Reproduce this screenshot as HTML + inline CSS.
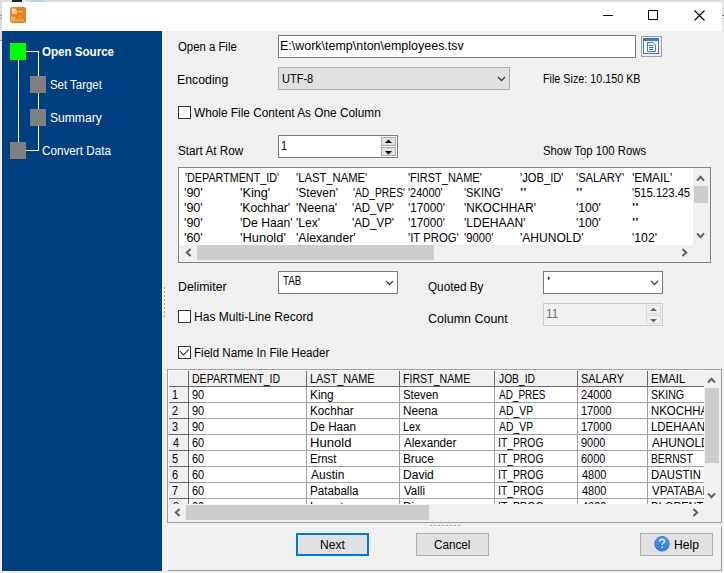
<!DOCTYPE html><html><head><meta charset="utf-8"><style>
*{margin:0;padding:0;box-sizing:border-box}
html,body{width:724px;height:573px;overflow:hidden;background:#f0f0f0;font-family:"Liberation Sans",sans-serif;font-size:12px;color:#000;position:relative}
.a{position:absolute}
.t{position:absolute;white-space:nowrap;line-height:14px}
.cl{position:absolute;overflow:hidden;left:0;top:0}
</style></head><body>
<div class="a" style="left:0px;top:0px;width:724px;height:2px;background:#dedede"></div>
<div class="a" style="left:0px;top:0px;width:2px;height:40px;background:#dcdcdc"></div>
<div class="a" style="left:0px;top:40px;width:2px;height:533px;background:#f0f0f0"></div>
<div class="a" style="left:0px;top:15px;width:2px;height:1px;background:#909090"></div>
<div class="a" style="left:0px;top:18px;width:2px;height:1px;background:#a8a8a8"></div>
<div class="a" style="left:0px;top:40px;width:2px;height:1px;background:#a0a0a0"></div>
<div class="a" style="left:722px;top:0px;width:2px;height:31px;background:#e6e6e6"></div>
<div class="a" style="left:722px;top:31px;width:2px;height:542px;background:#f0f0f0"></div>
<div class="a" style="left:722px;top:15px;width:2px;height:1px;background:#808080"></div>
<div class="a" style="left:722px;top:18px;width:2px;height:1px;background:#c8c8c8"></div>
<div class="a" style="left:0px;top:571px;width:724px;height:2px;background:#f0f0f0"></div>
<div class="a" style="left:12px;top:0px;width:10px;height:2px;background:#202020"></div>
<div class="a" style="left:30px;top:0px;width:14px;height:2px;background:#b4cff0"></div>
<div class="a" style="left:2px;top:2px;width:720px;height:29px;background:#fff"></div>
<div class="a" style="left:2px;top:31px;width:720px;height:540px;background:#f0f0f0"></div>
<svg class="a" style="left:10px;top:7px" width="16" height="16"><rect x="0" y="0" width="16" height="16" rx="2.5" fill="#e8821f"/><path d="M2.2 1.8H4.8L6.3 3.3V6.6H2.2Z" fill="#f6d2ad" stroke="#fbe8d5" stroke-width="0.6"/><rect x="8" y="4" width="4.5" height="1.2" fill="#f2b57a"/><rect x="9.2" y="8.5" width="1.4" height="1.4" fill="#f2b57a"/><rect x="1.5" y="10" width="3.5" height="4" fill="#eea567" stroke="#f6caa0" stroke-width="0.6"/><rect x="6" y="12.8" width="8" height="1.2" fill="#f2b57a"/></svg>
<div class="a" style="left:603px;top:15px;width:10px;height:1px;background:#000"></div>
<div class="a" style="left:648px;top:10px;width:10px;height:10px;border:1px solid #000"></div>
<svg class="a" style="left:694px;top:10px" width="11" height="11"><path d="M0.5 0.5L10.5 10.5M10.5 0.5L0.5 10.5" stroke="#000" stroke-width="1.1"/></svg>
<div class="a" style="left:2px;top:31px;width:160px;height:540px;background:#003f7f"></div>
<div class="a" style="left:26px;top:51px;width:13px;height:1px;background:#fff"></div>
<div class="a" style="left:38px;top:51px;width:1px;height:100px;background:#fff"></div>
<div class="a" style="left:26px;top:150px;width:13px;height:1px;background:#fff"></div>
<div class="a" style="left:18px;top:59px;width:1px;height:83px;background:#fff"></div>
<div class="a" style="left:10px;top:43px;width:16px;height:17px;background:#00ff00"></div>
<div class="a" style="left:30px;top:76px;width:16px;height:17px;background:#808080"></div>
<div class="a" style="left:30px;top:109px;width:16px;height:17px;background:#808080"></div>
<div class="a" style="left:10px;top:142px;width:16px;height:17px;background:#808080"></div>
<div class="t" style="left:42.40px;top:44.7px;transform:scaleX(0.9649);transform-origin:0 0;color:#fff;font-weight:bold">Open Source</div>
<div class="t" style="left:50.25px;top:77.6px;transform:scaleX(0.9519);transform-origin:0 0;color:#fff">Set Target</div>
<div class="t" style="left:49.59px;top:110.8px;transform:scaleX(1.0080);transform-origin:0 0;color:#fff">Summary</div>
<div class="t" style="left:41.73px;top:143.8px;transform:scaleX(0.9743);transform-origin:0 0;color:#fff">Convert Data</div>
<div class="t" style="left:178.30px;top:39.8px;transform:scaleX(0.9468);transform-origin:0 0;">Open a File</div>
<div class="a" style="left:278px;top:35px;width:358px;height:23px;background:#fff;border:1px solid #7a7a7a"></div>
<div class="t" style="left:279.96px;top:38.8px;transform:scaleX(1.0398);transform-origin:0 0;">E:\work\temp\nton\employees.tsv</div>
<div class="a" style="left:641px;top:36px;width:21px;height:21px;background:#f0ebe5;border:1px solid #a0a0a0"></div>
<svg class="a" style="left:643px;top:38px" width="17" height="17"><rect x="0.5" y="0.5" width="15" height="15" fill="#fbf8f2" stroke="#3c78d0"/><rect x="0" y="0" width="16" height="3" fill="#3c78d0"/><rect x="1" y="1" width="1" height="1" fill="#f00"/><path d="M4.5 4.5H10L12.5 7V13.5H4.5Z" fill="#eafaff" stroke="#3c78d0"/><path d="M6 7.5H10.5M6 9.5H10.5M6 11.5H10.5" stroke="#587090" stroke-width="1"/></svg>
<div class="t" style="left:177.28px;top:73.0px;transform:scaleX(1.0250);transform-origin:0 0;">Encoding</div>
<div class="a" style="left:278px;top:67px;width:232px;height:23px;background:#e1e1e1;border:1px solid #adadad"></div>
<div class="t" style="left:281.68px;top:72.1px;transform:scaleX(0.9170);transform-origin:0 0;">UTF-8</div>
<svg class="a" style="left:496.5px;top:76px" width="9" height="6"><path d="M1 1L4.5 4.5L8 1" stroke="#404040" fill="none" stroke-width="1.3"/></svg>
<div class="t" style="left:542.60px;top:72.0px;transform:scaleX(0.8972);transform-origin:0 0;">File Size: 10.150 KB</div>
<div class="a" style="left:178px;top:106px;width:13px;height:13px;background:#fff;border:1px solid #333"></div>
<div class="t" style="left:194.00px;top:106.0px;transform:scaleX(0.9857);transform-origin:0 0;">Whole File Content As One Column</div>
<div class="t" style="left:177.52px;top:143.5px;transform:scaleX(0.9773);transform-origin:0 0;">Start At Row</div>
<div class="a" style="left:278px;top:135px;width:120px;height:23px;background:#fff;border:1px solid #7a7a7a"></div>
<div class="t" style="left:281.39px;top:139.0px;transform:scaleX(0.9133);transform-origin:0 0;">1</div>
<div class="a" style="left:381px;top:137px;width:15px;height:9px;background:#e1e1e1;border:1px solid #adadad"></div>
<div class="a" style="left:381px;top:147px;width:15px;height:9px;background:#e1e1e1;border:1px solid #adadad"></div>
<svg class="a" style="left:385px;top:139px" width="7" height="16"><path d="M0 4L3.5 0.5L7 4Z M0 12L3.5 15.5L7 12Z" fill="#000"/></svg>
<div class="t" style="left:542.56px;top:144.0px;transform:scaleX(0.9444);transform-origin:0 0;">Show Top 100 Rows</div>
<div class="a" style="left:178px;top:167px;width:533px;height:96px;background:#fff;border:1px solid #828282"></div>
<div class="a" style="left:179px;top:168px;width:514px;height:77px;overflow:hidden"><div class="a" style="left:-179px;top:-168px;width:724px;height:573px">
<div class="t" style="left:184.50px;top:170.7px;transform:scaleX(0.8971);transform-origin:0 0;">'DEPARTMENT_ID'</div>
<div class="t" style="left:296.46px;top:170.7px;transform:scaleX(0.9370);transform-origin:0 0;">'LAST_NAME'</div>
<div class="t" style="left:408.48px;top:170.7px;transform:scaleX(0.9153);transform-origin:0 0;">'FIRST_NAME'</div>
<div class="t" style="left:520.47px;top:170.7px;transform:scaleX(0.9330);transform-origin:0 0;">'JOB_ID'</div>
<div class="t" style="left:576.47px;top:170.7px;transform:scaleX(0.9319);transform-origin:0 0;">'SALARY'</div>
<div class="t" style="left:632.41px;top:170.7px;transform:scaleX(0.9903);transform-origin:0 0;">'EMAIL'</div>
<div class="t" style="left:184.35px;top:185.7px;transform:scaleX(1.0453);transform-origin:0 0;">'90'</div>
<div class="t" style="left:240.34px;top:185.7px;transform:scaleX(1.0580);transform-origin:0 0;">'King'</div>
<div class="t" style="left:296.40px;top:185.7px;transform:scaleX(0.9998);transform-origin:0 0;">'Steven'</div>
<div class="t" style="left:352.54px;top:185.7px;transform:scaleX(0.8576);transform-origin:0 0;">'AD_PRES'</div>
<div class="t" style="left:408.49px;top:185.7px;transform:scaleX(0.9135);transform-origin:0 0;">'24000'</div>
<div class="t" style="left:464.47px;top:185.7px;transform:scaleX(0.9268);transform-origin:0 0;">'SKING'</div>
<div class="t" style="left:519.97px;top:185.7px;transform:scaleX(1.4286);transform-origin:0 0;">''</div>
<div class="t" style="left:575.97px;top:185.7px;transform:scaleX(1.4286);transform-origin:0 0;">''</div>
<div class="t" style="left:632.47px;top:185.7px;transform:scaleX(0.9312);transform-origin:0 0;">'515.123.45</div>
<div class="t" style="left:184.35px;top:200.7px;transform:scaleX(1.0453);transform-origin:0 0;">'90'</div>
<div class="t" style="left:240.38px;top:200.7px;transform:scaleX(1.0164);transform-origin:0 0;">'Kochhar'</div>
<div class="t" style="left:296.37px;top:200.7px;transform:scaleX(1.0311);transform-origin:0 0;">'Neena'</div>
<div class="t" style="left:352.44px;top:200.7px;transform:scaleX(0.9556);transform-origin:0 0;">'AD_VP'</div>
<div class="t" style="left:408.42px;top:200.7px;transform:scaleX(0.9757);transform-origin:0 0;">'17000'</div>
<div class="t" style="left:464.42px;top:200.7px;transform:scaleX(0.9819);transform-origin:0 0;">'NKOCHHAR'</div>
<div class="t" style="left:576.39px;top:200.7px;transform:scaleX(1.0095);transform-origin:0 0;">'100'</div>
<div class="t" style="left:631.97px;top:200.7px;transform:scaleX(1.4286);transform-origin:0 0;">''</div>
<div class="t" style="left:184.35px;top:215.7px;transform:scaleX(1.0453);transform-origin:0 0;">'90'</div>
<div class="t" style="left:240.39px;top:215.7px;transform:scaleX(1.0118);transform-origin:0 0;">'De Haan'</div>
<div class="t" style="left:296.40px;top:215.7px;transform:scaleX(0.9997);transform-origin:0 0;">'Lex'</div>
<div class="t" style="left:352.44px;top:215.7px;transform:scaleX(0.9556);transform-origin:0 0;">'AD_VP'</div>
<div class="t" style="left:408.42px;top:215.7px;transform:scaleX(0.9757);transform-origin:0 0;">'17000'</div>
<div class="t" style="left:464.39px;top:215.7px;transform:scaleX(1.0050);transform-origin:0 0;">'LDEHAAN'</div>
<div class="t" style="left:576.39px;top:215.7px;transform:scaleX(1.0095);transform-origin:0 0;">'100'</div>
<div class="t" style="left:631.97px;top:215.7px;transform:scaleX(1.4286);transform-origin:0 0;">''</div>
<div class="t" style="left:184.35px;top:230.7px;transform:scaleX(1.0453);transform-origin:0 0;">'60'</div>
<div class="t" style="left:240.32px;top:230.7px;transform:scaleX(1.0765);transform-origin:0 0;">'Hunold'</div>
<div class="t" style="left:296.38px;top:230.7px;transform:scaleX(1.0158);transform-origin:0 0;">'Alexander'</div>
<div class="t" style="left:408.46px;top:230.7px;transform:scaleX(0.9431);transform-origin:0 0;">'IT PROG'</div>
<div class="t" style="left:464.46px;top:230.7px;transform:scaleX(0.9400);transform-origin:0 0;">'9000'</div>
<div class="t" style="left:520.40px;top:230.7px;transform:scaleX(1.0048);transform-origin:0 0;">'AHUNOLD'</div>
<div class="t" style="left:632.38px;top:230.7px;transform:scaleX(1.0174);transform-origin:0 0;">'102'</div>
</div></div>
<div class="a" style="left:693px;top:168px;width:17px;height:77px;background:#f0f0f0"></div>
<div class="a" style="left:694px;top:186px;width:14px;height:17px;background:#cdcdcd"></div>
<div class="a" style="left:179px;top:245px;width:531px;height:17px;background:#f0f0f0"></div>
<div class="a" style="left:197px;top:245px;width:237px;height:15px;background:#cdcdcd"></div>
<svg class="a" style="left:695.8px;top:173.8px" width="9" height="9"><path d="M1 6.6L4.5 2.8L8 6.6" stroke="#606060" fill="none" stroke-width="2"/></svg>
<svg class="a" style="left:695.8px;top:231.0px" width="9" height="9"><path d="M1 2.4L4.5 6.2L8 2.4" stroke="#606060" fill="none" stroke-width="2"/></svg>
<svg class="a" style="left:183.5px;top:248.0px" width="9" height="9"><path d="M6.6 1L2.8 4.5L6.6 8" stroke="#606060" fill="none" stroke-width="2"/></svg>
<svg class="a" style="left:679.5px;top:247.8px" width="9" height="9"><path d="M2.4 1L6.2 4.5L2.4 8" stroke="#606060" fill="none" stroke-width="2"/></svg>
<div class="t" style="left:177.67px;top:280.2px;transform:scaleX(1.0283);transform-origin:0 0;">Delimiter</div>
<div class="a" style="left:278px;top:271px;width:120px;height:23px;background:#fff;border:1px solid #7a7a7a"></div>
<div class="t" style="left:283.20px;top:274.2px;transform:scaleX(0.8182);transform-origin:0 0;">TAB</div>
<svg class="a" style="left:385px;top:280px" width="9" height="6"><path d="M1 1L4.5 4.5L8 1" stroke="#404040" fill="none" stroke-width="1.3"/></svg>
<div class="t" style="left:428.10px;top:279.7px;transform:scaleX(0.9772);transform-origin:0 0;">Quoted By</div>
<div class="a" style="left:543px;top:271px;width:120px;height:23px;background:#fff;border:1px solid #7a7a7a"></div>
<div class="t" style="left:546.57px;top:275.0px;transform:scaleX(1.4286);transform-origin:0 0;">'</div>
<svg class="a" style="left:649.5px;top:280px" width="9" height="6"><path d="M1 1L4.5 4.5L8 1" stroke="#404040" fill="none" stroke-width="1.3"/></svg>
<div class="a" style="left:178px;top:310px;width:13px;height:13px;background:#fff;border:1px solid #333"></div>
<div class="t" style="left:194.00px;top:309.5px;transform:scaleX(1.0034);transform-origin:0 0;">Has Multi-Line Record</div>
<div class="t" style="left:427.96px;top:311.6px;transform:scaleX(1.0395);transform-origin:0 0;">Column Count</div>
<div class="a" style="left:543px;top:303px;width:120px;height:23px;background:#f0f0f0;border:1px solid #cccccc"></div>
<div class="t" style="left:546.02px;top:306.5px;transform:scaleX(0.9787);transform-origin:0 0;color:#6d6d6d">11</div>
<div class="a" style="left:646px;top:305px;width:15px;height:9px;background:#f0f0f0;border:1px solid #d9d9d9"></div>
<div class="a" style="left:646px;top:315px;width:15px;height:9px;background:#f0f0f0;border:1px solid #d9d9d9"></div>
<svg class="a" style="left:650px;top:307px" width="7" height="16"><path d="M0 4L3.5 0.5L7 4Z M0 12L3.5 15.5L7 12Z" fill="#6a6a6a"/></svg>
<div class="a" style="left:178px;top:346px;width:13px;height:13px;background:#fff;border:1px solid #333"></div>
<svg class="a" style="left:178px;top:346px" width="13" height="13"><path d="M1.8 5.2L5.4 9L11 3.3" stroke="#3a3a3a" fill="none" stroke-width="1.1"/></svg>
<div class="t" style="left:194.03px;top:346.0px;transform:scaleX(0.9662);transform-origin:0 0;">Field Name In File Header</div>
<div class="a" style="left:167px;top:369px;width:555px;height:154px;background:#fff;border:1px solid #a0a0a0"></div>
<div class="a" style="left:168px;top:370px;width:536px;height:134px;overflow:hidden"><div class="a" style="left:-168px;top:-370px;width:724px;height:573px">
<div class="a" style="left:169px;top:371px;width:535px;height:15px;background:#f0f0f0"></div>
<div class="a" style="left:169px;top:387px;width:19px;height:120px;background:#f0f0f0"></div>
<div class="a" style="left:169px;top:402px;width:19px;height:1px;background:#696969"></div>
<div class="a" style="left:189px;top:402px;width:520px;height:1px;background:#a0a0a0"></div>
<div class="a" style="left:169px;top:418px;width:19px;height:1px;background:#696969"></div>
<div class="a" style="left:189px;top:418px;width:520px;height:1px;background:#a0a0a0"></div>
<div class="a" style="left:169px;top:434px;width:19px;height:1px;background:#696969"></div>
<div class="a" style="left:189px;top:434px;width:520px;height:1px;background:#a0a0a0"></div>
<div class="a" style="left:169px;top:450px;width:19px;height:1px;background:#696969"></div>
<div class="a" style="left:189px;top:450px;width:520px;height:1px;background:#a0a0a0"></div>
<div class="a" style="left:169px;top:466px;width:19px;height:1px;background:#696969"></div>
<div class="a" style="left:189px;top:466px;width:520px;height:1px;background:#a0a0a0"></div>
<div class="a" style="left:169px;top:482px;width:19px;height:1px;background:#696969"></div>
<div class="a" style="left:189px;top:482px;width:520px;height:1px;background:#a0a0a0"></div>
<div class="a" style="left:169px;top:498px;width:19px;height:1px;background:#696969"></div>
<div class="a" style="left:189px;top:498px;width:520px;height:1px;background:#a0a0a0"></div>
<div class="a" style="left:169px;top:514px;width:19px;height:1px;background:#696969"></div>
<div class="a" style="left:189px;top:514px;width:520px;height:1px;background:#a0a0a0"></div>
<div class="a" style="left:169px;top:386px;width:540px;height:1px;background:#696969"></div>
<div class="a" style="left:188px;top:371px;width:1px;height:140px;background:#696969"></div>
<div class="a" style="left:306px;top:371px;width:1px;height:16px;background:#696969"></div>
<div class="a" style="left:306px;top:387px;width:1px;height:130px;background:#a0a0a0"></div>
<div class="a" style="left:399px;top:371px;width:1px;height:16px;background:#696969"></div>
<div class="a" style="left:399px;top:387px;width:1px;height:130px;background:#a0a0a0"></div>
<div class="a" style="left:494px;top:371px;width:1px;height:16px;background:#696969"></div>
<div class="a" style="left:494px;top:387px;width:1px;height:130px;background:#a0a0a0"></div>
<div class="a" style="left:577px;top:371px;width:1px;height:16px;background:#696969"></div>
<div class="a" style="left:577px;top:387px;width:1px;height:130px;background:#a0a0a0"></div>
<div class="a" style="left:647px;top:371px;width:1px;height:16px;background:#696969"></div>
<div class="a" style="left:647px;top:387px;width:1px;height:130px;background:#a0a0a0"></div>
<div class="t" style="left:192.22px;top:372.1px;transform:scaleX(0.8788);transform-origin:0 0;width:128.5px;overflow:hidden;">DEPARTMENT_ID</div>
<div class="t" style="left:310.19px;top:372.1px;transform:scaleX(0.9053);transform-origin:0 0;width:97.1px;overflow:hidden;">LAST_NAME</div>
<div class="t" style="left:403.22px;top:372.1px;transform:scaleX(0.8843);transform-origin:0 0;width:101.7px;overflow:hidden;">FIRST_NAME</div>
<div class="t" style="left:499.10px;top:372.1px;transform:scaleX(0.8548);transform-origin:0 0;width:91.1px;overflow:hidden;">JOB_ID</div>
<div class="t" style="left:581.19px;top:372.1px;transform:scaleX(0.9109);transform-origin:0 0;width:71.3px;overflow:hidden;">SALARY</div>
<div class="t" style="left:651.15px;top:372.1px;transform:scaleX(0.9543);transform-origin:0 0;width:113.1px;overflow:hidden;">EMAIL</div>
<div class="t" style="left:171.79px;top:388.0px;transform:scaleX(0.9133);transform-origin:0 0;">1</div>
<div class="t" style="left:192.19px;top:388.0px;transform:scaleX(0.9133);transform-origin:0 0;width:123.6px;overflow:hidden;">90</div>
<div class="t" style="left:310.11px;top:388.0px;transform:scaleX(0.9872);transform-origin:0 0;width:89.0px;overflow:hidden;">King</div>
<div class="t" style="left:403.15px;top:388.0px;transform:scaleX(0.9471);transform-origin:0 0;width:94.9px;overflow:hidden;">Steven</div>
<div class="t" style="left:499.10px;top:388.0px;transform:scaleX(0.8304);transform-origin:0 0;width:93.8px;overflow:hidden;">AD_PRES</div>
<div class="t" style="left:581.18px;top:388.0px;transform:scaleX(0.9219);transform-origin:0 0;width:70.4px;overflow:hidden;">24000</div>
<div class="t" style="left:651.21px;top:388.0px;transform:scaleX(0.8861);transform-origin:0 0;width:121.8px;overflow:hidden;">SKING</div>
<div class="t" style="left:171.79px;top:404.0px;transform:scaleX(0.9133);transform-origin:0 0;">2</div>
<div class="t" style="left:192.19px;top:404.0px;transform:scaleX(0.9133);transform-origin:0 0;width:123.6px;overflow:hidden;">90</div>
<div class="t" style="left:310.13px;top:404.0px;transform:scaleX(0.9741);transform-origin:0 0;width:90.2px;overflow:hidden;">Kochhar</div>
<div class="t" style="left:403.12px;top:404.0px;transform:scaleX(0.9795);transform-origin:0 0;width:91.8px;overflow:hidden;">Neena</div>
<div class="t" style="left:499.10px;top:404.0px;transform:scaleX(0.8667);transform-origin:0 0;width:89.9px;overflow:hidden;">AD_VP</div>
<div class="t" style="left:581.19px;top:404.0px;transform:scaleX(0.9133);transform-origin:0 0;width:71.1px;overflow:hidden;">17000</div>
<div class="t" style="left:651.15px;top:404.0px;transform:scaleX(0.9512);transform-origin:0 0;width:113.4px;overflow:hidden;">NKOCHHAR</div>
<div class="t" style="left:171.79px;top:420.0px;transform:scaleX(0.9133);transform-origin:0 0;">3</div>
<div class="t" style="left:192.19px;top:420.0px;transform:scaleX(0.9133);transform-origin:0 0;width:123.6px;overflow:hidden;">90</div>
<div class="t" style="left:310.13px;top:420.0px;transform:scaleX(0.9713);transform-origin:0 0;width:90.5px;overflow:hidden;">De Haan</div>
<div class="t" style="left:403.20px;top:420.0px;transform:scaleX(0.8978);transform-origin:0 0;width:100.1px;overflow:hidden;">Lex</div>
<div class="t" style="left:499.10px;top:420.0px;transform:scaleX(0.8667);transform-origin:0 0;width:89.9px;overflow:hidden;">AD_VP</div>
<div class="t" style="left:581.19px;top:420.0px;transform:scaleX(0.9133);transform-origin:0 0;width:71.1px;overflow:hidden;">17000</div>
<div class="t" style="left:651.15px;top:420.0px;transform:scaleX(0.9510);transform-origin:0 0;width:113.5px;overflow:hidden;">LDEHAAN</div>
<div class="t" style="left:172.70px;top:436.0px;transform:scaleX(0.9133);transform-origin:0 0;">4</div>
<div class="t" style="left:192.19px;top:436.0px;transform:scaleX(0.9133);transform-origin:0 0;width:123.6px;overflow:hidden;">60</div>
<div class="t" style="left:310.01px;top:436.0px;transform:scaleX(1.0889);transform-origin:0 0;width:80.7px;overflow:hidden;">Hunold</div>
<div class="t" style="left:404.10px;top:436.0px;transform:scaleX(0.9704);transform-origin:0 0;width:92.6px;overflow:hidden;">Alexander</div>
<div class="t" style="left:498.24px;top:436.0px;transform:scaleX(0.8625);transform-origin:0 0;width:90.3px;overflow:hidden;">IT_PROG</div>
<div class="t" style="left:581.19px;top:436.0px;transform:scaleX(0.9133);transform-origin:0 0;width:71.1px;overflow:hidden;">9000</div>
<div class="t" style="left:652.10px;top:436.0px;transform:scaleX(0.9814);transform-origin:0 0;width:109.9px;overflow:hidden;">AHUNOLD</div>
<div class="t" style="left:171.79px;top:452.0px;transform:scaleX(0.9133);transform-origin:0 0;">5</div>
<div class="t" style="left:192.19px;top:452.0px;transform:scaleX(0.9133);transform-origin:0 0;width:123.6px;overflow:hidden;">60</div>
<div class="t" style="left:310.16px;top:452.0px;transform:scaleX(0.9407);transform-origin:0 0;width:93.4px;overflow:hidden;">Ernst</div>
<div class="t" style="left:403.12px;top:452.0px;transform:scaleX(0.9833);transform-origin:0 0;width:91.4px;overflow:hidden;">Bruce</div>
<div class="t" style="left:498.24px;top:452.0px;transform:scaleX(0.8625);transform-origin:0 0;width:90.3px;overflow:hidden;">IT_PROG</div>
<div class="t" style="left:581.19px;top:452.0px;transform:scaleX(0.9133);transform-origin:0 0;width:71.1px;overflow:hidden;">6000</div>
<div class="t" style="left:651.24px;top:452.0px;transform:scaleX(0.8570);transform-origin:0 0;width:125.9px;overflow:hidden;">BERNST</div>
<div class="t" style="left:171.79px;top:468.0px;transform:scaleX(0.9133);transform-origin:0 0;">6</div>
<div class="t" style="left:192.19px;top:468.0px;transform:scaleX(0.9133);transform-origin:0 0;width:123.6px;overflow:hidden;">60</div>
<div class="t" style="left:311.10px;top:468.0px;transform:scaleX(1.0030);transform-origin:0 0;width:87.6px;overflow:hidden;">Austin</div>
<div class="t" style="left:403.10px;top:468.0px;transform:scaleX(1.0000);transform-origin:0 0;width:89.9px;overflow:hidden;">David</div>
<div class="t" style="left:498.24px;top:468.0px;transform:scaleX(0.8625);transform-origin:0 0;width:90.3px;overflow:hidden;">IT_PROG</div>
<div class="t" style="left:582.10px;top:468.0px;transform:scaleX(0.9133);transform-origin:0 0;width:71.1px;overflow:hidden;">4800</div>
<div class="t" style="left:651.15px;top:468.0px;transform:scaleX(0.9461);transform-origin:0 0;width:114.0px;overflow:hidden;">DAUSTIN</div>
<div class="t" style="left:171.79px;top:484.0px;transform:scaleX(0.9133);transform-origin:0 0;">7</div>
<div class="t" style="left:192.19px;top:484.0px;transform:scaleX(0.9133);transform-origin:0 0;width:123.6px;overflow:hidden;">60</div>
<div class="t" style="left:310.13px;top:484.0px;transform:scaleX(0.9694);transform-origin:0 0;width:90.7px;overflow:hidden;">Pataballa</div>
<div class="t" style="left:404.10px;top:484.0px;transform:scaleX(0.9619);transform-origin:0 0;width:93.5px;overflow:hidden;">Valli</div>
<div class="t" style="left:498.24px;top:484.0px;transform:scaleX(0.8625);transform-origin:0 0;width:90.3px;overflow:hidden;">IT_PROG</div>
<div class="t" style="left:582.10px;top:484.0px;transform:scaleX(0.9133);transform-origin:0 0;width:71.1px;overflow:hidden;">4800</div>
<div class="t" style="left:652.10px;top:484.0px;transform:scaleX(0.9569);transform-origin:0 0;width:112.8px;overflow:hidden;">VPATABAL</div>
<div class="t" style="left:172.70px;top:500.0px;transform:scaleX(0.9133);transform-origin:0 0;">8</div>
<div class="t" style="left:192.19px;top:500.0px;transform:scaleX(0.9133);transform-origin:0 0;width:123.6px;overflow:hidden;">60</div>
<div class="t" style="left:310.11px;top:500.0px;transform:scaleX(0.9855);transform-origin:0 0;width:89.2px;overflow:hidden;">Lorentz</div>
<div class="t" style="left:403.13px;top:500.0px;transform:scaleX(0.9742);transform-origin:0 0;width:92.3px;overflow:hidden;">Diana</div>
<div class="t" style="left:498.24px;top:500.0px;transform:scaleX(0.8625);transform-origin:0 0;width:90.3px;overflow:hidden;">IT_PROG</div>
<div class="t" style="left:582.10px;top:500.0px;transform:scaleX(0.9133);transform-origin:0 0;width:71.1px;overflow:hidden;">4200</div>
<div class="t" style="left:651.19px;top:500.0px;transform:scaleX(0.9085);transform-origin:0 0;width:118.8px;overflow:hidden;">DLORENTZ</div>
</div></div>
<div class="a" style="left:704px;top:370px;width:17px;height:134px;background:#f0f0f0"></div>
<div class="a" style="left:705px;top:388px;width:14px;height:75px;background:#cdcdcd"></div>
<svg class="a" style="left:707.0px;top:375.5px" width="9" height="9"><path d="M1 6.6L4.5 2.8L8 6.6" stroke="#606060" fill="none" stroke-width="2"/></svg>
<svg class="a" style="left:707.2px;top:491.1px" width="9" height="9"><path d="M1 2.4L4.5 6.2L8 2.4" stroke="#606060" fill="none" stroke-width="2"/></svg>
<div class="a" style="left:168px;top:504px;width:553px;height:18px;background:#f0f0f0"></div>
<div class="a" style="left:186px;top:505px;width:243px;height:15px;background:#cdcdcd"></div>
<svg class="a" style="left:172.5px;top:507.9px" width="9" height="9"><path d="M6.6 1L2.8 4.5L6.6 8" stroke="#606060" fill="none" stroke-width="2"/></svg>
<svg class="a" style="left:690.5px;top:507.9px" width="9" height="9"><path d="M2.4 1L6.2 4.5L2.4 8" stroke="#606060" fill="none" stroke-width="2"/></svg>
<div class="a" style="left:430px;top:525px;width:2px;height:1px;background:#a0a0a0"></div>
<div class="a" style="left:434px;top:525px;width:2px;height:1px;background:#a0a0a0"></div>
<div class="a" style="left:438px;top:525px;width:2px;height:1px;background:#a0a0a0"></div>
<div class="a" style="left:442px;top:525px;width:2px;height:1px;background:#a0a0a0"></div>
<div class="a" style="left:446px;top:525px;width:2px;height:1px;background:#a0a0a0"></div>
<div class="a" style="left:450px;top:525px;width:2px;height:1px;background:#a0a0a0"></div>
<div class="a" style="left:454px;top:525px;width:2px;height:1px;background:#a0a0a0"></div>
<div class="a" style="left:458px;top:525px;width:2px;height:1px;background:#a0a0a0"></div>
<div class="a" style="left:164px;top:287px;width:1px;height:2px;background:#a0a0a0"></div>
<div class="a" style="left:164px;top:291px;width:1px;height:2px;background:#a0a0a0"></div>
<div class="a" style="left:164px;top:295px;width:1px;height:2px;background:#a0a0a0"></div>
<div class="a" style="left:164px;top:299px;width:1px;height:2px;background:#a0a0a0"></div>
<div class="a" style="left:164px;top:303px;width:1px;height:2px;background:#a0a0a0"></div>
<div class="a" style="left:164px;top:307px;width:1px;height:2px;background:#a0a0a0"></div>
<div class="a" style="left:164px;top:311px;width:1px;height:2px;background:#a0a0a0"></div>
<div class="a" style="left:164px;top:315px;width:1px;height:2px;background:#a0a0a0"></div>
<div class="a" style="left:167px;top:526px;width:555px;height:45px;border-top:1px solid #fff;border-left:1px solid #fff;border-right:1px solid #a0a0a0;border-bottom:1px solid #a0a0a0"></div>
<div class="a" style="left:296px;top:533px;width:73px;height:23px;background:#e1e1e1;border:2px solid #0078d7"></div>
<div class="t" style="left:320.49px;top:538.0px;transform:scaleX(1.0083);transform-origin:0 0;">Next</div>
<div class="a" style="left:416px;top:533px;width:73px;height:23px;background:#e1e1e1;border:1px solid #adadad"></div>
<div class="t" style="left:434.22px;top:538.0px;transform:scaleX(0.9750);transform-origin:0 0;">Cancel</div>
<div class="a" style="left:640px;top:533px;width:73px;height:23px;background:#e1e1e1;border:1px solid #adadad"></div>
<svg class="a" style="left:654px;top:536px" width="16" height="16"><defs><linearGradient id="hg" x1="0" y1="0" x2="0" y2="1"><stop offset="0" stop-color="#4f9cf0"/><stop offset="1" stop-color="#2f7ae0"/></linearGradient></defs><circle cx="8" cy="7.8" r="7.3" fill="url(#hg)" stroke="#2a6cc8" stroke-width="0.8"/><path d="M5.6 5.6C5.6 4.2 6.6 3.4 8 3.4C9.4 3.4 10.4 4.2 10.4 5.4C10.4 6.8 8.2 7 8.2 9" stroke="#fff" stroke-width="1.2" fill="none"/><rect x="7.5" y="10.6" width="1.4" height="1.4" fill="#fff"/></svg>
<div class="t" style="left:673.79px;top:538.0px;transform:scaleX(1.0087);transform-origin:0 0;">Help</div>
</body></html>
